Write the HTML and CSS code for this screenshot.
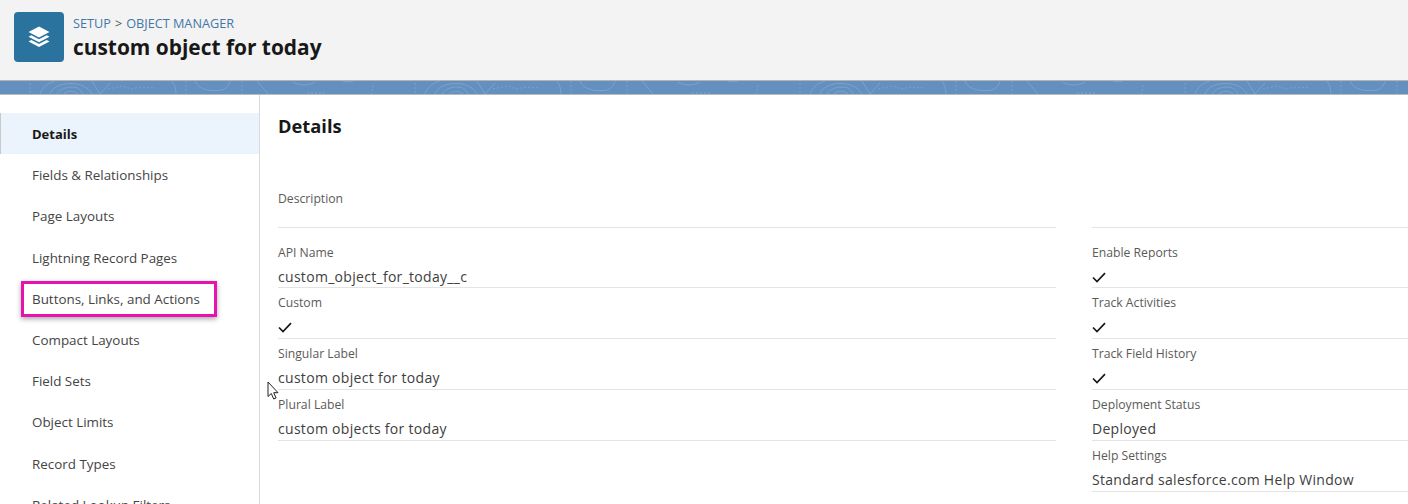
FILE: index.html
```html
<!DOCTYPE html>
<html lang="en">
<head>
<meta charset="utf-8">
<title>custom object for today</title>
<link rel="stylesheet" href="styles.css">
</head>
<body>
<header class="header">
  <div class="app-icon">
    <svg width="24" height="24" viewBox="0 0 24 24"><path fill="#fff" d="M12 1.500 22.500 7 12 12.500 1.500 7z"/><path fill="#fff" d="M4.300 10.200 12 14.200l7.700-4 2.800 1.500L12 17.300 1.500 11.700z"/><path fill="#fff" d="M4.300 15 12 19l7.700-4 2.800 1.500L12 22 1.500 16.500z"/></svg>
  </div>
  <div class="titles">
    <div class="crumbs"><span>SETUP</span><span class="sep">&gt;</span><span>OBJECT MANAGER</span></div>
    <h1 class="title">custom object for today</h1>
  </div>
</header>
<div class="band">
  <svg class="band-art" width="1408" height="13" viewBox="0 0 1408 13">
    <defs>
      <pattern id="doodle" patternUnits="userSpaceOnUse" width="385" height="13">
        <g fill="none" stroke="#8fb1d5" stroke-width="1">
          <path d="M40 13C42 7 47 2 55 0M50 13C53 5 62 2.500 71 2.500S88 6 92 13M57 13C60 8 66 6 72 6S80 8 83 13M64 13C66 10 74 9 78 13"/>
          <path d="M92 0l8 13 10-11M172 0c3 4 4 9 4 13M195 0C198 9 212 11 222 9 227 7 229 4 230 0M257 0l11 13M293 1C300 5 308 5 315 1M343 0c3 1 7 1 10 0"/>
          <path stroke-dasharray="2 2" d="M30 2v11M108 8l14-3 10 3 8-2 15 1M186 0v13M242 0v13M307 12h20M373 4c0 3-1 6-2 9"/>
        </g>
      </pattern>
    </defs>
    <rect class="band-fill" width="1408" height="13" fill="url(#doodle)"/>
  </svg>
</div>
<div class="main">
  <nav class="side">
    <a class="nav-item active">Details</a>
    <a class="nav-item">Fields &amp; Relationships</a>
    <a class="nav-item">Page Layouts</a>
    <a class="nav-item">Lightning Record Pages</a>
    <a class="nav-item">Buttons, Links, and Actions</a>
    <a class="nav-item">Compact Layouts</a>
    <a class="nav-item">Field Sets</a>
    <a class="nav-item">Object Limits</a>
    <a class="nav-item">Record Types</a>
    <a class="nav-item">Related Lookup Filters</a>
  </nav>
  <section class="content">
    <h2 class="heading">Details</h2>
    <div class="cols">
      <div class="col">
        <div class="field desc"><div class="label">Description</div></div>
        <div class="field"><div class="label">API Name</div><div class="value">custom_object_for_today__c</div></div>
        <div class="field"><div class="label">Custom</div><div class="value"><svg class="check" viewBox="0 0 14 11"><path d="M1 5.500 5 9.500 13 1.200"/></svg></div></div>
        <div class="field"><div class="label">Singular Label</div><div class="value">custom object for today</div></div>
        <div class="field"><div class="label">Plural Label</div><div class="value">custom objects for today</div></div>
      </div>
      <div class="col">
        <div class="field desc"></div>
        <div class="field"><div class="label">Enable Reports</div><div class="value"><svg class="check" viewBox="0 0 14 11"><path d="M1 5.500 5 9.500 13 1.200"/></svg></div></div>
        <div class="field"><div class="label">Track Activities</div><div class="value"><svg class="check" viewBox="0 0 14 11"><path d="M1 5.500 5 9.500 13 1.200"/></svg></div></div>
        <div class="field"><div class="label">Track Field History</div><div class="value"><svg class="check" viewBox="0 0 14 11"><path d="M1 5.500 5 9.500 13 1.200"/></svg></div></div>
        <div class="field"><div class="label">Deployment Status</div><div class="value">Deployed</div></div>
        <div class="field"><div class="label">Help Settings</div><div class="value">Standard salesforce.com Help Window</div></div>
      </div>
    </div>
  </section>
</div>
<div class="callout"></div>
<svg class="cursor" width="13" height="20" viewBox="0 0 13 20"><path fill="#fff" stroke="#222" stroke-width="1" stroke-linejoin="round" d="M1 1v14.500l3.300-3 2.400 5.500 2.400-1-2.400-5.300h4.300z"/></svg>
</body>
</html>
```
FILE: styles.css
```css
* { box-sizing: border-box; }
html, body { margin: 0; height: 504px; overflow: hidden; }
body { position: relative; background: #fff; color: #3e3e3c; font-family: "Open Sans", "Noto Sans", "Liberation Sans", sans-serif; }

.header { height: 81px; padding: 12px 14px 0; display: flex; gap: 9px; background: #f3f3f3; border-bottom: 1px solid #b4b4b4; }
.app-icon { width: 50px; height: 50px; border-radius: 4px; background: #2a739e; display: flex; align-items: center; justify-content: center; }
.titles { display: flex; flex-direction: column; }
.crumbs { display: flex; gap: 4px; font-size: 12.700px; line-height: 16px; margin-top: 3px; color: #4477a8; }
.crumbs .sep { color: #555; }
.title { margin: 3px 0 0; font-size: 20.900px; line-height: 27px; font-weight: 700; color: #181818; }

.band { height: 14px; background: #6490bf; border-bottom: 1px solid #b8bcc0; overflow: hidden; }
.band-art { display: block; opacity: .55; }

.main { display: flex; height: 409px; }
.side { width: 260px; flex: none; padding-top: 18px; border-right: 1px solid #dddbda; }
.nav-item { display: block; height: 41.200px; padding: 1px 0 0 32px; font-size: 13.400px; line-height: 41px; color: #444; }
.nav-item.active { background: #ebf3fd; font-weight: 700; color: #181818; font-size: 13px; border-left: 1px solid #c9c9c9; padding-left: 31px; }

.content { flex: 1; min-width: 0; padding: 0 0 0 18px; }
.heading { margin: 18px 0 0; font-size: 18.300px; line-height: 25px; font-weight: 700; color: #181818; }
.cols { display: grid; grid-template-columns: 778px 1fr; column-gap: 36px; margin-top: 32px; margin-right: -40px; }
.field { height: 50.800px; padding-top: 6px; border-bottom: 1px solid #e3e3e3; }
.field.desc { height: 58px; padding-top: 20px; margin-bottom: 9.700px; }
.label { font-size: 12.200px; line-height: 17px; color: #5c5a58; }
.value { font-size: 14px; line-height: 20px; margin-top: 6px; color: #3e3e3c; letter-spacing: .3px; white-space: nowrap; height: 20px; }
.check { display: block; width: 14px; height: 11px; margin-top: 11px; fill: none; stroke: #181818; stroke-width: 1.700; }

.callout { position: absolute; left: 21px; top: 281px; width: 196px; height: 36px; border: 3px solid #e812ae; box-shadow: 0 2px 5px rgba(0,0,0,.35); }
.cursor { position: absolute; left: 267px; top: 381px; }
```
